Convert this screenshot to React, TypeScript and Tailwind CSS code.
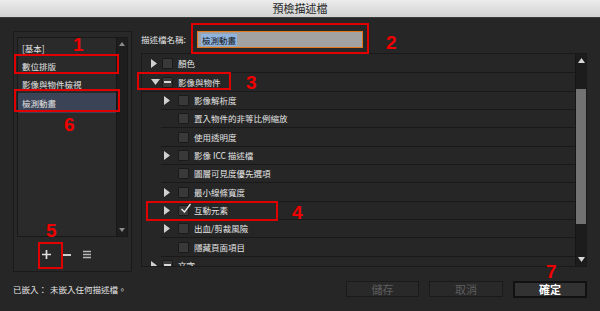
import React from 'react';

type Row = {
  label: string;
  level: 0 | 1;
  arrow: 'right' | 'down' | null;
  check: 'none' | 'mixed' | 'checked';
};

const rows: Row[] = [
  { label: '顏色', level: 0, arrow: 'right', check: 'none' },
  { label: '影像與物件', level: 0, arrow: 'down', check: 'mixed' },
  { label: '影像解析度', level: 1, arrow: 'right', check: 'none' },
  { label: '置入物件的非等比例縮放', level: 1, arrow: null, check: 'none' },
  { label: '使用透明度', level: 1, arrow: null, check: 'none' },
  { label: '影像 ICC 描述檔', level: 1, arrow: 'right', check: 'none' },
  { label: '圖層可見度優先選項', level: 1, arrow: null, check: 'none' },
  { label: '最小線條寬度', level: 1, arrow: 'right', check: 'none' },
  { label: '互動元素', level: 1, arrow: 'right', check: 'checked' },
  { label: '出血/剪裁風險', level: 1, arrow: 'right', check: 'none' },
  { label: '隱藏頁面項目', level: 1, arrow: null, check: 'none' },
  { label: '文字', level: 0, arrow: 'right', check: 'mixed' },
];

const font = { fontFamily: '"Noto Sans CJK TC", "Noto Sans", sans-serif' };

const Arrow = ({ dir }: { dir: 'right' | 'down' }) =>
  dir === 'right' ? (
    <svg width="6" height="9" viewBox="0 0 6 9">
      <path d="M0 0 L6 4.5 L0 9 Z" fill="#d0d0d0" />
    </svg>
  ) : (
    <svg width="9" height="6" viewBox="0 0 9 6">
      <path d="M0 0 L9 0 L4.5 6 Z" fill="#d0d0d0" />
    </svg>
  );

const Check = ({ state }: { state: Row['check'] }) => (
  <div className="relative w-[11px] h-[11px] rounded-[1px] bg-[#393939] border border-[#1a1a1a] flex items-center justify-center shrink-0">
    {state === 'mixed' && <div className="w-[7px] h-[2px] bg-[#d8d8d8]" />}
    {state === 'checked' && (
      <svg width="12" height="11" viewBox="0 0 12 11" className="absolute -top-[3px] left-[1px]">
        <path d="M1.5 6 L4.5 9 L10.5 1" stroke="#f0f0f0" strokeWidth="1.3" fill="none" />
      </svg>
    )}
  </div>
);

const RedBox = ({ className }: { className: string }) => (
  <div className={`absolute border-2 border-[#e00000] pointer-events-none ${className}`} />
);

const RedNum = ({ n, className }: { n: string; className: string }) => (
  <div
    className={`absolute text-[19px] leading-none font-bold text-[#f00000] ${className}`}
    style={{ fontFamily: '"Liberation Sans", Arial, sans-serif' }}
  >
    {n}
  </div>
);

export default function App() {
  return (
    <div className="relative w-[600px] h-[311px] bg-[#262626] flex flex-col overflow-hidden" style={font}>
      {/* title bar */}
      <div className="h-[18px] bg-gradient-to-b from-[#ececec] to-[#d2d2d2] border-b border-[#3a3a3a] flex items-center justify-center">
        <span className="text-[11px] text-[#1e1e1e] leading-none">預檢描述檔</span>
      </div>

      <div className="flex-1 flex flex-col pl-[13px] pr-[13px] pt-[12px]">
        <div className="flex gap-[9px]">
          {/* left column */}
          <div className="w-[119px] h-[241px] mt-[1px] border border-[#1a1a1a] bg-[#282828] flex flex-col px-[3px] pt-[5px]">
            <div className="h-[200px] border border-[#191919] bg-[#2a2a2a] flex">
              <div className="flex-1 flex flex-col pt-[1px] text-[8.5px] text-[#e4e4e4]">
                <div className="h-[18px] flex items-center pl-[4px]">[基本]</div>
                <div className="h-[18px] flex items-center pl-[4px]">數位排版</div>
                <div className="h-[18px] flex items-center pl-[4px]">影像與物件檢視</div>
                <div className="h-[20px] flex items-center pl-[4px] bg-[#3b4357]">檢測動畫</div>
              </div>
              <div className="w-[11px] bg-[#1e1e1e] border-l border-[#171717] flex flex-col items-center justify-between py-[4px]">
                <svg width="6" height="4" viewBox="0 0 6 4">
                  <path d="M0 4 L3 0 L6 4 Z" fill="#8a8a8a" />
                </svg>
                <svg width="6" height="4" viewBox="0 0 6 4">
                  <path d="M0 0 L6 0 L3 4 Z" fill="#8a8a8a" />
                </svg>
              </div>
            </div>
            <div className="flex-1 flex items-center justify-center gap-[10px] pr-[12px] pt-[1px]">
              <svg width="11" height="11" viewBox="0 0 11 11">
                <path d="M5.5 1 V10 M1 5.5 H10" stroke="#e0e0e0" strokeWidth="1.7" />
              </svg>
              <svg width="10" height="10" viewBox="0 0 10 10">
                <path d="M1 5 H9" stroke="#e0e0e0" strokeWidth="1.8" />
              </svg>
              <svg width="10" height="9" viewBox="0 0 10 9">
                <path d="M1 1.5 H9 M1 4.5 H9 M1 7.5 H9" stroke="#b8b8b8" strokeWidth="1.4" />
              </svg>
            </div>
          </div>

          {/* right column */}
          <div className="flex-1 flex flex-col">
            <div className="h-[17px] flex items-center mt-[1px]">
              <span className="text-[8.5px] text-[#e4e4e4] w-[56px]">描述檔名稱:</span>
              <div className="w-[166px] h-[17px] bg-[#a2a2a2] border border-[#e07820] flex items-center pl-[3px]">
                <span className="text-[8.5px] text-[#111] bg-[#8fb4e0] leading-[12px] px-[1px]">檢測動畫</span>
              </div>
            </div>
            <div className="mt-[5px] h-[214px] border border-[#1a1a1a] bg-[#262626] flex overflow-hidden">
              <div className="flex-1 flex flex-col pt-[1px] text-[8.5px] text-[#e4e4e4]">
                {rows.map((r) => (
                  <div key={r.label} className="h-[18.35px] shrink-0 flex flex-col">
                    <div className={`flex-1 flex items-center ${r.level === 0 ? 'pl-[9px]' : 'pl-[22px]'}`}>
                      <div className={`${r.level === 0 ? 'w-[11px]' : 'w-[14px]'} flex items-center`}>
                        {r.arrow && <Arrow dir={r.arrow} />}
                      </div>
                      <Check state={r.check} />
                      <span className="ml-[5px]">{r.label}</span>
                    </div>
                    <div className={`h-px bg-[#191919] ${r.level === 1 ? 'ml-[19px]' : ''}`} />
                  </div>
                ))}
              </div>
              <div className="w-[11px] bg-[#1c1c1c] border-l border-[#161616] flex flex-col items-center">
                <svg width="7" height="5" viewBox="0 0 7 5" className="mt-[4px]">
                  <path d="M0 5 L3.5 0 L7 5 Z" fill="#d8d8d8" />
                </svg>
                <div className="mt-[26px] w-[10px] h-[135px] bg-[#727272]" />
                <div className="flex-1" />
                <svg width="7" height="5" viewBox="0 0 7 5" className="mb-[4px]">
                  <path d="M0 0 L7 0 L3.5 5 Z" fill="#d8d8d8" />
                </svg>
              </div>
            </div>
          </div>
        </div>

        {/* footer */}
        <div className="mt-[9px] h-[17px] flex items-center">
          <span className="text-[8.5px] text-[#e4e4e4]">已嵌入：</span>
          <span className="text-[8.5px] text-[#e4e4e4] ml-[3px]">未嵌入任何描述檔。</span>
          <div className="flex-1" />
          <div className="flex gap-[10px]">
            <button className="w-[73px] h-[16px] bg-[#292929] border border-[#1a1a1a] text-[11px] text-[#5e5e5e] flex items-center justify-center">儲存</button>
            <button className="w-[74px] h-[16px] bg-[#292929] border border-[#1a1a1a] text-[11px] text-[#5e5e5e] flex items-center justify-center">取消</button>
            <button className="w-[74px] h-[17px] bg-[#323232] border-2 border-[#111111] text-[11px] font-bold text-white flex items-center justify-center">確定</button>
          </div>
        </div>
      </div>

      {/* annotations */}
      <RedBox className="left-[14px] top-[54px] w-[105px] h-[20px]" />
      <RedBox className="left-[14px] top-[89px] w-[106px] h-[23px]" />
      <RedBox className="left-[191px] top-[23px] w-[178px] h-[31px]" />
      <RedBox className="left-[137px] top-[72px] w-[94px] h-[18px]" />
      <RedBox className="left-[146px] top-[201px] w-[132px] h-[20px]" />
      <RedBox className="left-[38px] top-[242px] w-[25px] h-[27px]" />
      <RedNum n="1" className="left-[73px] top-[35px] text-[17px]" />
      <RedNum n="2" className="left-[386px] top-[33px]" />
      <RedNum n="3" className="left-[246px] top-[73px]" />
      <RedNum n="4" className="left-[292px] top-[203px]" />
      <RedNum n="5" className="left-[46px] top-[221px]" />
      <RedNum n="6" className="left-[64px] top-[115px]" />
      <RedNum n="7" className="left-[546px] top-[262px]" />
    </div>
  );
}
